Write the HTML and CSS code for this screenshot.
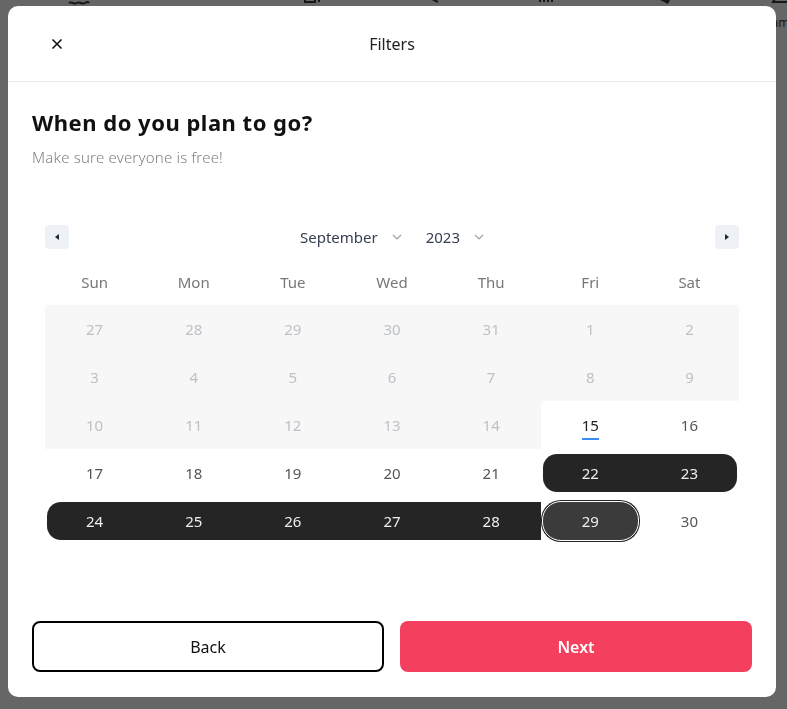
FILE: index.html
```html
<!DOCTYPE html>
<html lang="en">
<head>
<meta charset="utf-8">
<title>Filters</title>
<link rel="stylesheet" href="styles.css">
</head>
<body>
<div class="page">
  <nav class="cats">
    <div class="cat"><svg viewBox="0 0 24 24" width="24" height="24"><path d="M2 10c3-2 5 2 8 0s5 2 8 0 4 0 4 0M2 15c3-2 5 2 8 0s5 2 8 0 4 0 4 0" fill="none" stroke="#3a3a3a" stroke-width="2"/></svg><span>Beach</span></div>
    <div class="cat"><svg viewBox="0 0 24 24" width="24" height="24"><path d="M2 12c2-6 18-6 20 0z" fill="#3a3a3a"/></svg><span>Islands</span></div>
    <div class="cat"><svg viewBox="0 0 24 24" width="24" height="24"><path d="M4 4h10v10H4zM18 2v12" fill="none" stroke="#3a3a3a" stroke-width="2"/></svg><span>Lake</span></div>
    <div class="cat"><svg viewBox="0 0 24 24" width="24" height="24"><path d="M4 4l8 6 8 4" fill="none" stroke="#3a3a3a" stroke-width="2"/></svg><span>Skiing</span></div>
    <div class="cat"><svg viewBox="0 0 24 24" width="24" height="24"><path d="M5 4v10M9 4v10M13 4v10M17 4v10" fill="none" stroke="#3a3a3a" stroke-width="2"/></svg><span>Castles</span></div>
    <div class="cat"><svg viewBox="0 0 24 24" width="24" height="24"><path d="M4 10l8-6 8 4-4 8z" fill="#3a3a3a"/></svg><span>Caves</span></div>
    <div class="cat"><svg viewBox="0 0 24 24" width="24" height="24"><path d="M12 2L4 14h16z" fill="none" stroke="#3a3a3a" stroke-width="2"/></svg><span>Camp</span></div>
  </nav>
</div>

<div class="overlay">
  <div class="modal">
    <header class="modal-head">
      <button class="close" aria-label="Close">
        <svg viewBox="0 0 12 12" width="12" height="12"><path d="M1.5 1.5l9 9M10.5 1.5l-9 9" stroke="#111" stroke-width="1.6" fill="none"/></svg>
      </button>
      <h1 class="modal-title">Filters</h1>
    </header>

    <div class="modal-body">
      <h2 class="question">When do you plan to go?</h2>
      <p class="sub">Make sure everyone is free!</p>

      <div class="cal">
        <div class="cal-nav">
          <button class="nav-btn" aria-label="Previous month"><svg viewBox="0 0 8 8" width="8" height="8"><path d="M6 1v6L2 4z" fill="#1f2937"/></svg></button>
          <div class="selects">
            <div class="sel">September <svg viewBox="0 0 10 6" width="10" height="6"><path d="M1 1l4 4 4-4" fill="none" stroke="#9ca3af" stroke-width="1.2"/></svg></div>
            <div class="sel">2023 <svg viewBox="0 0 10 6" width="10" height="6"><path d="M1 1l4 4 4-4" fill="none" stroke="#9ca3af" stroke-width="1.2"/></svg></div>
          </div>
          <button class="nav-btn" aria-label="Next month"><svg viewBox="0 0 8 8" width="8" height="8"><path d="M2 1v6l4-3z" fill="#1f2937"/></svg></button>
        </div>

        <div class="grid">
          <div class="wd">Sun</div><div class="wd">Mon</div><div class="wd">Tue</div><div class="wd">Wed</div><div class="wd">Thu</div><div class="wd">Fri</div><div class="wd">Sat</div>

          <div class="day off"><span>27</span></div><div class="day off"><span>28</span></div><div class="day off"><span>29</span></div><div class="day off"><span>30</span></div><div class="day off"><span>31</span></div><div class="day off"><span>1</span></div><div class="day off"><span>2</span></div>

          <div class="day off"><span>3</span></div><div class="day off"><span>4</span></div><div class="day off"><span>5</span></div><div class="day off"><span>6</span></div><div class="day off"><span>7</span></div><div class="day off"><span>8</span></div><div class="day off"><span>9</span></div>

          <div class="day off"><span>10</span></div><div class="day off"><span>11</span></div><div class="day off"><span>12</span></div><div class="day off"><span>13</span></div><div class="day off"><span>14</span></div><div class="day today"><span>15</span></div><div class="day"><span>16</span></div>

          <div class="day"><span>17</span></div><div class="day"><span>18</span></div><div class="day"><span>19</span></div><div class="day"><span>20</span></div><div class="day"><span>21</span></div><div class="day in start"><span>22</span></div><div class="day in row-end"><span>23</span></div>

          <div class="day in row-start"><span>24</span></div><div class="day in"><span>25</span></div><div class="day in"><span>26</span></div><div class="day in"><span>27</span></div><div class="day in"><span>28</span></div><div class="day end"><span>29</span></div><div class="day"><span>30</span></div>
        </div>
      </div>
    </div>

    <footer class="modal-foot">
      <button class="btn back">Back</button>
      <button class="btn next">Next</button>
    </footer>
  </div>
</div>
</body>
</html>
```

FILE: styles.css
```css
* { box-sizing: border-box; }

html, body {
  margin: 0;
  height: 100%;
}

body {
  font-family: "Noto Sans", "Lato", sans-serif;
  background: #fff;
  color: #222;
  overflow: hidden;
}

.page {
  height: 100%;
}

.cats {
  display: flex;
  padding: 0 0 0 20px;
  margin-top: -12px;
}

.cat {
  width: 117px;
  flex: none;
  display: flex;
  flex-direction: column;
  align-items: center;
  gap: 4px;
  font-size: 12px;
  line-height: 14px;
  color: #3a3a3a;
}

.overlay {
  position: fixed;
  inset: 0;
  background: rgba(0, 0, 0, 0.6);
  padding: 6px 0 0 8px;
}

.modal {
  width: 768px;
  height: 691px;
  background: #fff;
  border-radius: 10px;
  display: flex;
  flex-direction: column;
  overflow: hidden;
}

.modal-head {
  height: 76px;
  flex: none;
  border-bottom: 1px solid #e8e8e8;
  display: flex;
  align-items: center;
  justify-content: center;
  position: relative;
}

.close {
  position: absolute;
  left: 33px;
  top: 22px;
  width: 32px;
  height: 32px;
  border: 0;
  background: transparent;
  padding: 0;
  display: flex;
  align-items: center;
  justify-content: center;
}

.modal-title {
  margin: 0;
  font-size: 16px;
  font-weight: 400;
  color: #222;
}

.modal-body {
  padding: 26px 24px 0;
}

.question {
  margin: 0;
  font-size: 22px;
  line-height: 28px;
  font-weight: 700;
  color: #111;
  letter-spacing: 0.5px;
}

.sub {
  margin: 11px 0 0;
  font-size: 15px;
  line-height: 20px;
  color: #808080;
  font-weight: 300;
  letter-spacing: 0.2px;
}

.cal {
  margin-top: 58px;
  padding: 0 13px;
}

.cal-nav {
  display: flex;
  align-items: center;
  justify-content: space-between;
  height: 24px;
}

.nav-btn {
  width: 24px;
  height: 24px;
  border: 0;
  border-radius: 4px;
  background: #eef1f5;
  padding: 0;
  display: flex;
  align-items: center;
  justify-content: center;
}

.selects {
  display: flex;
  gap: 24px;
  align-items: center;
}

.sel {
  display: flex;
  align-items: center;
  gap: 14px;
  font-size: 15px;
  color: #374151;
}

.grid {
  margin-top: 8px;
  display: grid;
  grid-template-columns: repeat(7, 1fr);
}

.wd {
  height: 48px;
  padding-top: 2px;
  display: flex;
  align-items: center;
  justify-content: center;
  font-size: 15px;
  color: #777;
}

.day {
  height: 48px;
  display: flex;
  align-items: center;
  justify-content: center;
  font-size: 15px;
  color: #555;
  position: relative;
}

.day span {
  position: relative;
  z-index: 1;
}

.day.off {
  background: #f7f7f7;
  color: #bdc1c7;
}

.day.today span::after {
  content: "";
  position: absolute;
  left: 0;
  right: 0;
  bottom: -5px;
  height: 2px;
  background: #3b8cf5;
}

.day.today {
  color: #222;
}

.day.in::before,
.day.end::before {
  content: "";
  position: absolute;
  top: 5px;
  bottom: 5px;
  left: 0;
  right: 0;
  background: #252525;
}

.day.in,
.day.end {
  color: #eee;
}

.day.start::before,
.day.row-start::before {
  left: 2px;
  border-top-left-radius: 14px;
  border-bottom-left-radius: 14px;
}

.day.row-end::before {
  right: 2px;
  border-top-right-radius: 14px;
  border-bottom-right-radius: 14px;
}

.day.end::before {
  top: 4px;
  bottom: 4px;
  background: #3b3b3b;
  border: 1px solid #fff;
  border-radius: 19px;
  box-shadow: 0 0 0 1px #222;
  left: 1px;
  right: 1px;
}

.modal-foot {
  margin-top: auto;
  padding: 0 24px 25px;
  display: grid;
  grid-template-columns: 1fr 1fr;
  gap: 16px;
}

.btn {
  height: 51px;
  border-radius: 8px;
  font-family: inherit;
  font-size: 16px;
  cursor: pointer;
}

.btn.back {
  background: #fff;
  border: 2px solid #000;
  color: #111;
}

.btn.next {
  background: #f43f5e;
  border: 0;
  color: #fff;
  font-weight: 600;
}
```
